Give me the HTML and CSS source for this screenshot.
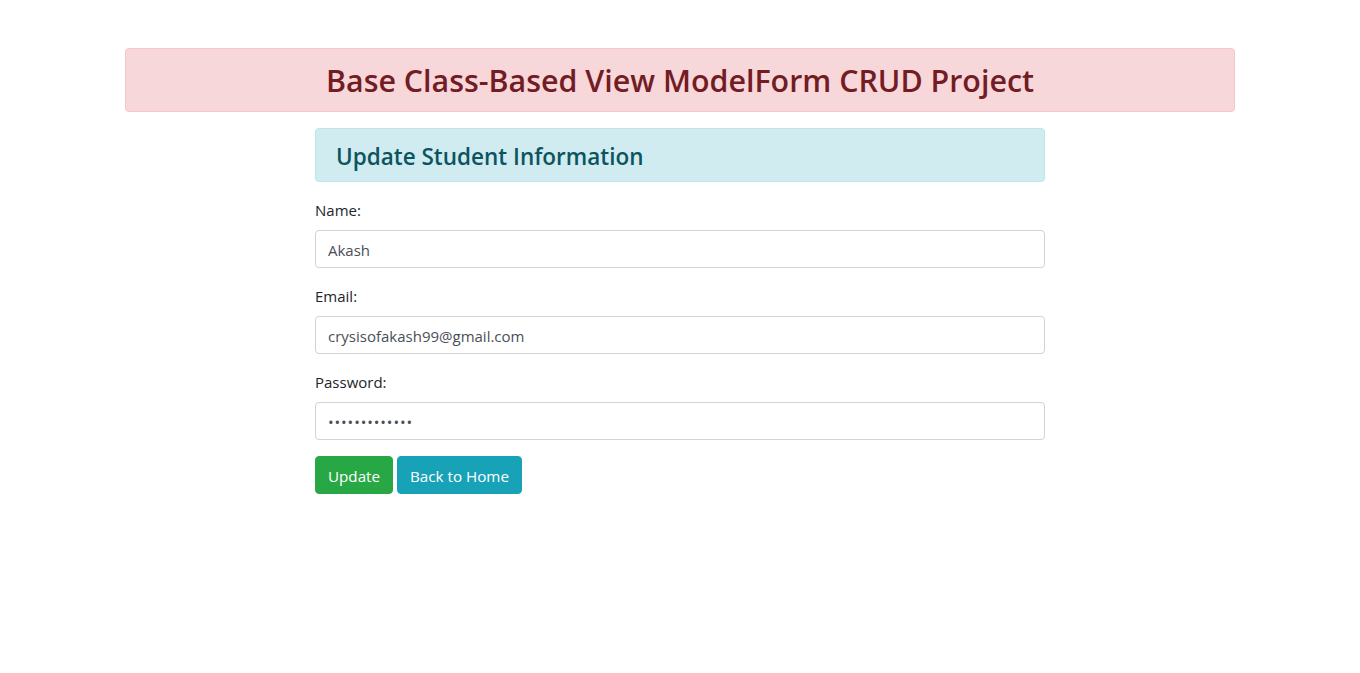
FILE: index.html
```html
<!DOCTYPE html>
<html lang="en">
<head>
<meta charset="utf-8">
<title>Update Student</title>
<link rel="stylesheet" href="styles.css">
</head>
<body>
<div class="container">
  <div class="alert alert-danger page-title">
    <h2>Base Class-Based View ModelForm CRUD Project</h2>
  </div>
  <div class="row">
    <div class="col">
      <div class="alert alert-info section-title">
        <h4>Update Student Information</h4>
      </div>
      <form class="form">
        <div class="form-group">
          <label for="name">Name:</label>
          <input id="name" class="form-control" type="text" value="Akash">
        </div>
        <div class="form-group">
          <label for="email">Email:</label>
          <input id="email" class="form-control" type="email" value="crysisofakash99@gmail.com">
        </div>
        <div class="form-group">
          <label for="password">Password:</label>
          <input id="password" class="form-control password" type="password" value="akash12345678">
        </div>
        <div class="actions">
          <button type="button" class="btn btn-success">Update</button>
          <button type="button" class="btn btn-info">Back to Home</button>
        </div>
      </form>
    </div>
  </div>
</div>
</body>
</html>
```
FILE: styles.css
```css
* { box-sizing: border-box; }
html, body { margin: 0; }
body {
  font-family: "Open Sans", "Noto Sans", sans-serif;
  font-size: 16px;
  line-height: 1.5;
  color: #212529;
  background: #fff;
}
.container {
  width: 1140px;
  margin: 0 auto;
  padding: 48px 15px 0;
}
.alert {
  padding: 12px 20px;
  border: 1px solid transparent;
  border-radius: 4px;
  margin-bottom: 16px;
}
.alert-danger { background: #f8d7da; border-color: #f5c6cb; color: #721c24; }
.alert-info { background: #d1ecf1; border-color: #bee5eb; color: #0c5460; }
.page-title { text-align: center; height: 64px; }
.page-title h2 {
  margin: 0;
  font-size: 30.4px;
  font-weight: 600;
  line-height: 39px;
}
.row { display: flex; justify-content: center; }
.col { width: 730px; }
.section-title { height: 54px; padding-top: 13px; padding-bottom: 11px; }
.section-title h4 {
  margin: 0;
  font-size: 22.5px;
  font-weight: 600;
  line-height: 29px;
}
.form-group { margin-bottom: 16px; }
label {
  display: block;
  margin-bottom: 8px;
  font-size: 15px;
  line-height: 24px;
}
.form-control {
  display: block;
  width: 100%;
  height: 38px;
  padding: 7px 12px 5px;
  font-family: inherit;
  font-size: 15px;
  color: #495057;
  background: #fff;
  border: 1px solid #ced4da;
  border-radius: 4px;
}
.password { letter-spacing: 0.9px; }
.actions { display: flex; gap: 4px; }
.btn {
  height: 38px;
  padding: 7px 12px 5px;
  font-family: inherit;
  font-size: 15.2px;
  color: #fff;
  border: 1px solid transparent;
  border-radius: 4px;
}
.btn-success { background: #28a745; border-color: #28a745; }
.btn-info { background: #17a2b8; border-color: #17a2b8; }
```
